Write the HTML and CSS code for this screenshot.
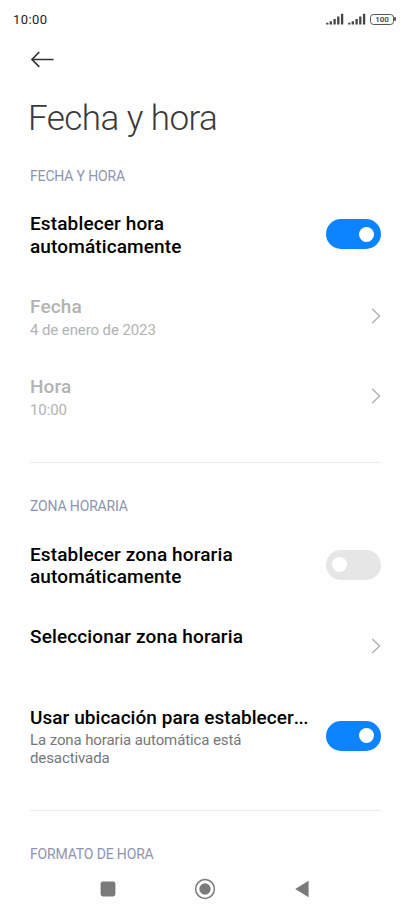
FILE: index.html
```html
<!DOCTYPE html>
<html lang="es">
<head>
<meta charset="utf-8">
<title>Fecha y hora</title>
<link rel="stylesheet" href="styles.css">
</head>
<body>
<div class="screen">
  <header class="status">
    <span class="clock">10:00</span>
    <span class="indicators">
      <svg class="signal" width="18" height="12" viewBox="0 0 18 12"><path d="M1.3 9.8V11.5M4.8 8.3V11.5M8.6 6V11.5M12.3 3.6V11.5M16.1 .8V11.5"/></svg>
      <svg class="signal" width="18" height="12" viewBox="0 0 18 12"><path d="M1.3 9.8V11.5M4.8 8.3V11.5M8.6 6V11.5M12.3 3.6V11.5M16.1 .8V11.5"/></svg>
      <span class="battery">100</span>
    </span>
  </header>
  <nav class="toolbar">
    <svg width="24" height="18" viewBox="0 0 24 18"><path d="M8.8 1.5L2 8.5L8.8 15.3M2 8.5H22.8"/></svg>
  </nav>
  <h1 class="title">Fecha y hora</h1>
  <main class="settings">
    <section class="group">
      <h2 class="group-name">FECHA Y HORA</h2>
      <div class="row two-line">
        <div class="label"><div class="name">Establecer hora<br>automáticamente</div></div>
        <span class="toggle on"></span>
      </div>
      <div class="row disabled">
        <div class="label"><div class="name">Fecha</div><div class="detail">4 de enero de 2023</div></div>
        <svg class="chevron" width="10" height="18" viewBox="0 0 10 18"><path d="M1.3 2L8.5 9L1.3 16"/></svg>
      </div>
      <div class="row disabled">
        <div class="label"><div class="name">Hora</div><div class="detail">10:00</div></div>
        <svg class="chevron" width="10" height="18" viewBox="0 0 10 18"><path d="M1.3 2L8.5 9L1.3 16"/></svg>
      </div>
    </section>
    <section class="group">
      <h2 class="group-name">ZONA HORARIA</h2>
      <div class="row two-line">
        <div class="label"><div class="name">Establecer zona horaria<br>automáticamente</div></div>
        <span class="toggle"></span>
      </div>
      <div class="row">
        <div class="label"><div class="name">Seleccionar zona horaria</div></div>
        <svg class="chevron" width="10" height="18" viewBox="0 0 10 18"><path d="M1.3 2L8.5 9L1.3 16"/></svg>
      </div>
      <div class="row three-line">
        <div class="label"><div class="name">Usar ubicación para establecer<span class="dots">...</span></div><div class="detail">La zona horaria automática está<br>desactivada</div></div>
        <span class="toggle on"></span>
      </div>
    </section>
    <section class="group">
      <h2 class="group-name">FORMATO DE HORA</h2>
    </section>
  </main>
  <footer class="navbar">
    <svg width="22" height="22" viewBox="0 0 22 22"><rect x="3.6" y="3.6" width="14.8" height="14.8" rx="2.4"/></svg>
    <svg width="22" height="22" viewBox="0 0 22 22"><circle class="ring" cx="11" cy="11" r="9.4"/><circle cx="11" cy="11" r="5.7"/></svg>
    <svg width="22" height="22" viewBox="0 0 22 22"><path d="M4.2 11L17.6 2.8V19.2Z"/></svg>
  </footer>
</div>
</body>
</html>
```
FILE: styles.css
```css
* { box-sizing: border-box; }
body { margin: 0; background: #fefefe; font-family: Roboto, sans-serif; color: #000; }
h1, h2 { margin: 0; font-weight: 400; }
svg { display: block; flex: none; }

.screen { width: 411px; height: 914px; overflow: hidden; display: flex; flex-direction: column; }

.status { height: 38px; flex: none; display: flex; justify-content: space-between; align-items: center; padding: 0 15px 0 13px; }
.clock { font-size: 13px; letter-spacing: .4px; color: #222; font-weight: 400; }
.indicators { display: flex; align-items: center; gap: 4px; }
.signal { fill: none; stroke: #444; stroke-width: 2.3; }
.battery {
  position: relative; width: 24px; height: 11px; margin-right: 2px;
  border: 1.5px solid #555; border-radius: 3.5px;
  font-size: 8px; line-height: 9px; font-weight: 600; text-align: center; color: #444;
}
.battery::after { content: ""; position: absolute; right: -3px; top: 2px; width: 2px; height: 4px; background: #555; border-radius: 1px; }

.toolbar { height: 43px; flex: none; display: flex; align-items: center; padding: 0 0 0 30px; }
.toolbar svg { fill: none; stroke: #333; stroke-width: 1.7; stroke-linecap: round; }

.title { flex: none; height: 74px; padding: 17px 0 0 28px; font-size: 35px; line-height: 42px; font-weight: 300; letter-spacing: -.55px; color: #3a3a3a; white-space: nowrap; }

.settings { flex: 1; min-height: 0; padding: 0 30px; overflow: hidden; }
.group { padding-top: 12.5px; }
.group-name { height: 25.5px; font-size: 14px; line-height: 17px; letter-spacing: -.15px; color: #8f94b0; white-space: nowrap; }
.group + .group { margin-top: 25px; border-top: 1px solid #ececec; padding-top: 35px; }
.group + .group .group-name { height: 26px; }

.row { display: flex; justify-content: space-between; align-items: center; height: 80.5px; }
.two-line { height: 82.5px; }
.three-line { height: 98px; }
.label { align-self: flex-start; padding-top: 20px; }
.name { font-size: 19px; line-height: 22.5px; font-weight: 500; letter-spacing: .13px; white-space: nowrap; }
.three-line .name { letter-spacing: .05px; }
.name .dots { letter-spacing: -.5px; }
.detail { margin-top: 3px; font-size: 15px; line-height: 17.5px; letter-spacing: -.1px; color: #777; white-space: nowrap; }
.disabled .name, .disabled .detail { color: #b3b3b3; }
.disabled .detail { margin-top: 3.5px; }

.toggle { flex: none; width: 55px; height: 30px; margin-right: .5px; border-radius: 15px; background: #e6e6e6; display: flex; align-items: center; padding: 0 6.5px; }
.toggle::before { content: ""; width: 15px; height: 15px; border-radius: 50%; background: #fff; }
.toggle.on { background: #0d84ff; justify-content: flex-end; }
.chevron { fill: none; stroke: #b0b0b0; stroke-width: 1.4; }

.navbar { height: 50px; flex: none; display: flex; justify-content: space-between; padding: 14px 98.5px 0 97.5px; fill: #7a7a7a; }
.navbar svg:first-child { margin-left: -.5px; }
.ring { fill: none; stroke: #7a7a7a; stroke-width: 1.5; }
```
